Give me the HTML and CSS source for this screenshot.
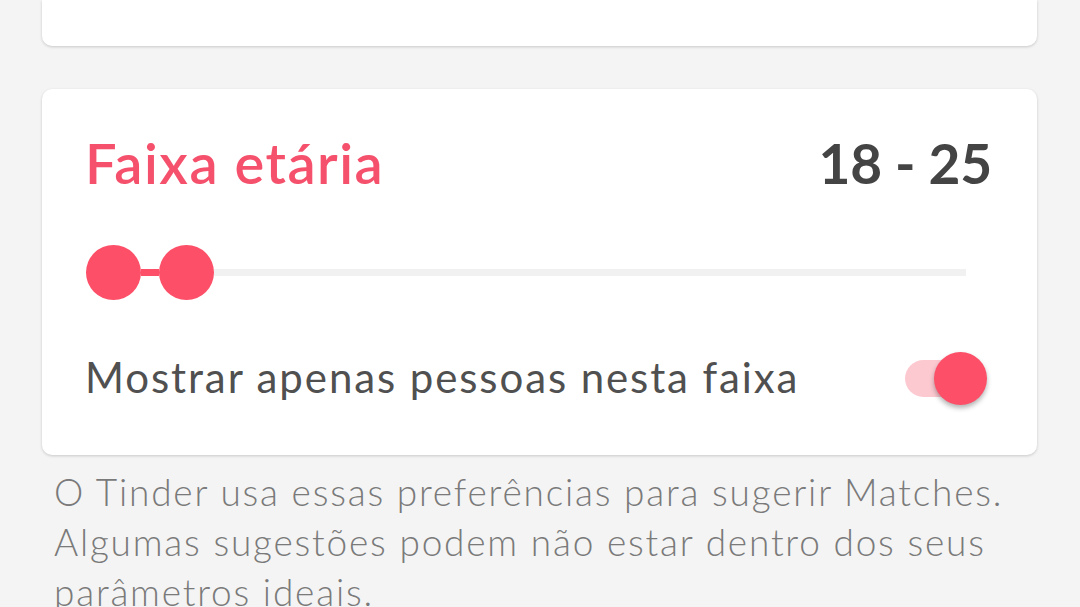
FILE: index.html
```html
<!DOCTYPE html>
<html lang="pt">
<head>
<meta charset="utf-8">
<link rel="stylesheet" href="styles.css">
</head>
<body>
<div class="page">
  <div class="card card-top"></div>
  <div class="card card-age">
    <div class="title-row">
      <span class="title">Faixa etária</span>
      <span class="value">18 - 25</span>
    </div>
    <div class="slider">
      <span class="thumb"></span>
      <span class="connector"></span>
      <span class="thumb"></span>
      <span class="track"></span>
    </div>
    <div class="toggle-row">
      <span class="label">Mostrar apenas pessoas nesta faixa</span>
      <span class="toggle"><span class="knob"></span></span>
    </div>
  </div>
  <p class="note">O Tinder usa essas preferências para sugerir Matches. Algumas sugestões podem não estar dentro dos seus parâmetros ideais.</p>
</div>
</body>
</html>
```

FILE: styles.css
```css
html, body {
  margin: 0;
  padding: 0;
  background: #f4f4f4;
  font-family: Lato, "Open Sans", sans-serif;
  overflow: hidden;
}
.page {
  width: 1080px;
  height: 607px;
  padding: 0 43px 0 42px;
  box-sizing: border-box;
}
.card {
  background: #fff;
  border-radius: 10px;
  box-shadow: 0 1px 3px rgba(0,0,0,0.18);
}
.card-top {
  height: 46px;
  border-radius: 0 0 10px 10px;
}
.card-age {
  margin-top: 43px;
  height: 366px;
  box-sizing: border-box;
  padding: 41px 43px 0 43px;
}
.title-row {
  display: flex;
  justify-content: space-between;
  align-items: baseline;
  height: 66px;
  line-height: 66px;
}
.title {
  color: #f5516c;
  font-size: 56px;
  font-weight: 600;
  letter-spacing: 1.5px;
}
.value {
  color: #444;
  font-size: 55px;
  font-weight: 700;
  letter-spacing: -0.2px;
  margin-right: 2px;
}
.slider {
  display: flex;
  align-items: center;
  margin-top: 48px;
  height: 56px;
  padding-left: 1px;
  padding-right: 28px;
}
.thumb {
  width: 55px;
  height: 55px;
  border-radius: 50%;
  background: #fd4f68;
  flex: none;
}
.connector {
  width: 18px;
  height: 7px;
  background: #fd4f68;
  flex: none;
}
.track {
  flex: 1;
  height: 7px;
  background: #f1f1f1;
}
.toggle-row {
  display: flex;
  justify-content: space-between;
  align-items: center;
  margin-top: 48px;
  height: 60px;
}
.label {
  color: #505050;
  font-size: 42px;
  font-weight: 400;
  letter-spacing: 1.9px;
  margin-top: -2px;
}
.toggle {
  position: relative;
  width: 80px;
  height: 37px;
  border-radius: 19px;
  background: #fcc9d1;
  margin-right: 9px;
}
.knob {
  position: absolute;
  right: -2px;
  top: -8px;
  width: 53px;
  height: 53px;
  border-radius: 50%;
  background: #fd4f68;
  box-shadow: 0 3px 5px rgba(0,0,0,0.3);
}
.note {
  margin: 12px 0 0 12px;
  color: #7a7a7a;
  font-size: 37px;
  font-weight: 300;
  letter-spacing: 1.8px;
  line-height: 50px;
  width: 970px;
}
```
